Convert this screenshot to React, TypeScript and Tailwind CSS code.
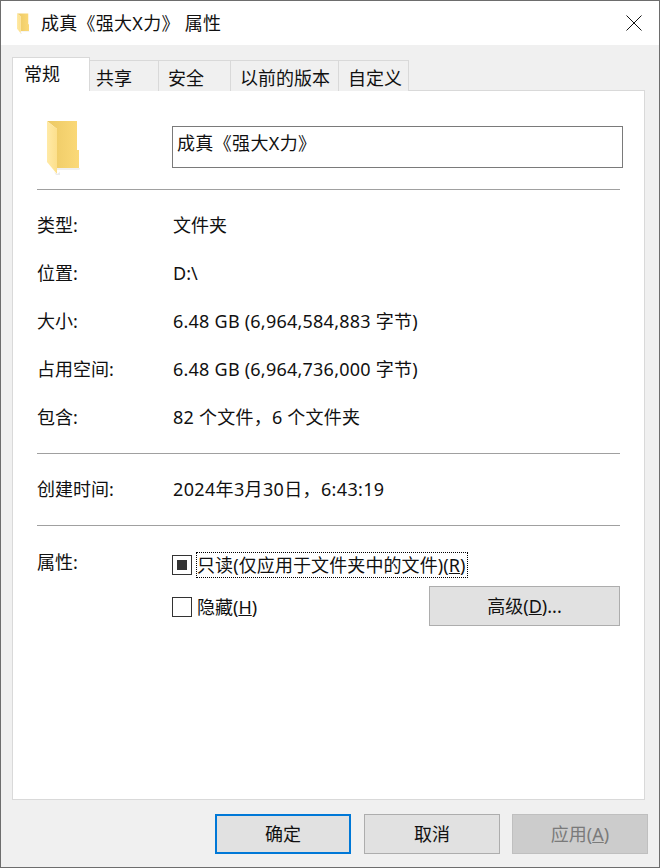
import React from "react";

const FONT = "font-['Noto_Sans','Noto_Sans_CJK_SC',sans-serif]";

function Folder({ className, id }: { className: string; id: string }) {
  return (
    <svg viewBox="0 0 34 56" className={className}>
      <defs>
        <linearGradient id={`${id}b`} x1="0" x2="1" y1="0" y2="0">
          <stop offset="0" stopColor="#ecc964" />
          <stop offset="1" stopColor="#fbd978" />
        </linearGradient>
        <linearGradient id={`${id}f`} x1="0" x2="1" y1="0" y2="0">
          <stop offset="0" stopColor="#ffeaa6" />
          <stop offset="1" stopColor="#fcdf8c" />
        </linearGradient>
      </defs>
      <path d="M1 1 L31 1 L31 30 L33 30 L33 48 L11 48 L11 9 Z" fill={`url(#${id}b)`} />
      <path d="M33 48 L35 48 L33 50 L11 50 L11 48 Z" fill="#f0f0f0" />
      <path d="M1 1 L11 9 L11 54 L1 42 Z" fill={`url(#${id}f)`} />
      <path d="M8 52 L11 54 L14 52 L14 55 L10 55 Z" fill="#ececec" />
    </svg>
  );
}

function Row({ label, value, mt, valueCls = "" }: { label: string; value: string; mt: string; valueCls?: string }) {
  return (
    <div className={`flex h-[24px] items-center ${mt}`}>
      <div className="w-[136px] shrink-0">{label}</div>
      <div className={valueCls}>{value}</div>
    </div>
  );
}

function Tab({ label, w }: { label: string; w: string }) {
  return (
    <div className={`${w} -ml-px flex h-[31px] items-center border border-b-0 border-[#d9d9d9] bg-[#f0f0f0] pl-[9px] pt-[3px] text-[18px] leading-none`}>
      {label}
    </div>
  );
}

function Btn({ children, cls }: { children: React.ReactNode; cls: string }) {
  return (
    <div className={`flex h-[40px] w-[136px] items-center justify-center bg-[#e1e1e1] text-[18px] ${cls}`}>
      {children}
    </div>
  );
}

export default function App() {
  return (
    <div className={`${FONT} flex h-[868px] w-[660px] flex-col border border-[#6d6d6d] bg-[#f0f0f0] text-[18px] text-[#111]`}>
      <div className="flex h-[44px] shrink-0 items-center bg-white pl-[15px] pr-[17px]">
        <Folder id="small" className="h-[21px] w-[14px]" />
        <div className="ml-[11px] text-[18px] tracking-[0.27px]">成真《强大X力》 属性</div>
        <svg viewBox="0 0 16 16" className="ml-auto h-[16px] w-[16px]" stroke="#111" strokeWidth="1" fill="none">
          <path d="M0.5 0.5 L15.5 15.5 M15.5 0.5 L0.5 15.5" />
        </svg>
      </div>
      <div className="flex min-h-0 flex-1 flex-col pl-[11px] pr-[14px] pt-[12px]">
        <div className="relative z-10 flex h-[34px] items-end">
          <div className="flex h-[34px] w-[78px] items-center border border-b-0 border-[#d9d9d9] bg-white pb-[1px] pl-[11px] leading-none">常规</div>
          <Tab label="共享" w="w-[70px] !pl-[6px]" />
          <Tab label="安全" w="w-[73px]" />
          <Tab label="以前的版本" w="w-[109px]" />
          <Tab label="自定义" w="w-[71px]" />
        </div>
        <div className="-mt-px flex h-[710px] flex-col border border-[#d9d9d9] bg-white pl-[24px] pr-[24px] pt-[29px]">
          <div className="flex items-start">
            <Folder id="large" className="ml-[9px] h-[56px] w-[34px]" />
            <div className="ml-[92px] mt-[6px] flex h-[42px] w-[451px] -mr-[3px] shrink-0 items-start border border-[#7a7a7a] px-[4px] leading-[32px] tracking-[0.35px]">
              成真《强大X力》
            </div>
          </div>
          <div className="mt-[13px] h-px bg-[#a0a0a0]" />
          <Row label="类型:" value="文件夹" mt="mt-[23px]" />
          <Row label="位置:" value="D:\" mt="mt-[24px]" />
          <Row label="大小:" value="6.48 GB (6,964,584,883 字节)" mt="mt-[24px]" valueCls="tracking-[0.23px]" />
          <Row label="占用空间:" value="6.48 GB (6,964,736,000 字节)" mt="mt-[24px]" valueCls="tracking-[0.23px]" />
          <Row label="包含:" value="82 个文件，6 个文件夹" mt="mt-[24px]" valueCls="tracking-[0.23px]" />
          <div className="mt-[24px] h-px bg-[#a0a0a0]" />
          <Row label="创建时间:" value="2024年3月30日，6:43:19" mt="mt-[23px]" valueCls="tracking-[0.35px]" />
          <div className="mt-[24px] h-px bg-[#a0a0a0]" />
          <div className="mt-[24px] flex">
            <div className="w-[135px] shrink-0 leading-[24px]">属性:</div>
            <div className="flex min-w-0 flex-1 flex-col">
              <div className="mt-[2px] flex items-center">
                <div className="flex h-[20px] w-[20px] items-center justify-center border border-[#333]">
                  <div className="h-[10px] w-[10px] bg-[#333]" />
                </div>
                <div className="ml-[4px] flex h-[26px] w-[272px] items-center border border-dotted border-black tracking-[0.1px]">
                  <span>只读(仅应用于文件夹中的文件)(<span className="underline">R</span>)</span>
                </div>
              </div>
              <div className="mt-[10px] flex items-center">
                <div className="h-[20px] w-[20px] border border-[#333]" />
                <div className="ml-[5px] leading-[24px]">
                  隐藏(<span className="underline">H</span>)
                </div>
                <div className="-mt-[2px] ml-auto flex h-[40px] w-[191px] items-center justify-center border border-[#adadad] bg-[#e1e1e1]">
                  <span>高级(<span className="underline">D</span>)...</span>
                </div>
              </div>
            </div>
          </div>
        </div>
        <div className="mt-[14px] flex justify-end gap-[12px] -mr-[3px]">
          <Btn cls="mr-px border-2 border-[#0078d7]">确定</Btn>
          <Btn cls="border border-[#adadad]">取消</Btn>
          <Btn cls="border border-[#bfbfbf] !bg-[#cccccc] text-[#7a7a7a]">
            <span>应用(<span className="underline">A</span>)</span>
          </Btn>
        </div>
      </div>
    </div>
  );
}
